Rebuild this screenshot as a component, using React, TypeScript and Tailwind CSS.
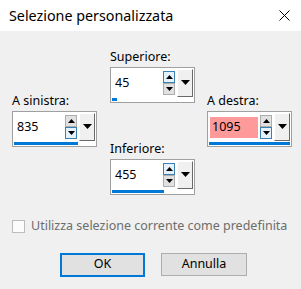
import React from "react";

const font = { fontFamily: '"Noto Sans", "Open Sans", sans-serif' };

function SpinBtn({ dir, active }: { dir: "up" | "down"; active: boolean }) {
  return (
    <div
      className={
        "w-[12px] h-[12px] flex items-center justify-center border " +
        (active ? "border-[#3c7fb1] bg-[#e5f1fb]" : "border-[#adadad] bg-[#e1e1e1]")
      }
    >
      <svg width="7" height="4" viewBox="0 0 7 4">
        {dir === "up" ? (
          <polygon points="0,4 7,4 3.5,0" fill="#000" />
        ) : (
          <polygon points="0,0 7,0 3.5,4" fill="#000" />
        )}
      </svg>
    </div>
  );
}

function SpinBox({
  value,
  bar,
  upActive,
  pink,
}: {
  value: string;
  bar: number;
  upActive: boolean;
  pink?: boolean;
}) {
  return (
    <div className="w-[85px] h-[36px] border border-[#a0a0a0] bg-white flex flex-col">
      <div className="flex-1 flex">
        <div className="flex-1 flex items-center pl-[2px] pr-[2px] pt-[1px]">
          <div
            className={
              "flex-1 h-[21px] flex items-center pl-[2px] text-[12.5px] text-black " +
              (pink ? "bg-[#ff9a9a]" : "")
            }
          >
            {value}
          </div>
          <div className="flex flex-col ml-[2px]">
            <SpinBtn dir="up" active={upActive} />
            <SpinBtn dir="down" active={!upActive} />
          </div>
        </div>
        <div className="w-[16px] mt-[1px] mr-[1px] bg-[#f0f0f0] border-t border-l border-t-white border-l-white border-r border-b border-r-[#696969] border-b-[#696969] flex justify-center pt-[10px]">
          <svg width="9" height="5" viewBox="0 0 9 5">
            <polygon points="0,0 9,0 4.5,5" fill="#000" />
          </svg>
        </div>
      </div>
      <div className="h-[5px] pt-[1px] px-[1px]">
        <div className="h-[3px] bg-[#0078d7]" style={{ width: `${bar}%` }} />
      </div>
    </div>
  );
}

function Group({
  label,
  children,
}: {
  label: string;
  children: React.ReactNode;
}) {
  return (
    <div className="flex flex-col">
      <div className="h-[16px] leading-[16px] text-[12.5px] text-black mb-[2px]">{label}</div>
      {children}
    </div>
  );
}

export default function App() {
  return (
    <div className="w-[301px] h-[289px] bg-[#f0f0f0] flex flex-col overflow-hidden" style={font}>
      <div className="h-[31px] bg-white flex items-center justify-between pl-[9px] pr-[10px]">
        <span className="text-[14.3px] text-black">Selezione personalizzata</span>
        <svg width="11" height="11" viewBox="0 0 11 11" className="mr-[1px]">
          <path d="M0.5 0.5 L10.5 10.5 M10.5 0.5 L0.5 10.5" stroke="#000" strokeWidth="1" />
        </svg>
      </div>
      <div className="flex pl-[12px]">
        <div className="pt-[62px]">
          <Group label="A sinistra:">
            <SpinBox value="835" bar={79} upActive={false} />
          </Group>
        </div>
        <div className="ml-[13px] pt-[18px] flex flex-col">
          <Group label="Superiore:">
            <SpinBox value="45" bar={6} upActive={true} />
          </Group>
          <div className="h-[38px]" />
          <Group label="Inferiore:">
            <SpinBox value="455" bar={64} upActive={true} />
          </Group>
        </div>
        <div className="ml-[12px] pt-[62px]">
          <Group label="A destra:">
            <SpinBox value="1095" bar={100} upActive={false} pink />
          </Group>
        </div>
      </div>
      <div className="flex items-center pl-[12px] mt-[22px]">
        <div className="w-[13px] h-[13px] border border-[#bcbcbc] bg-[#fcfcfc]" />
        <span className="ml-[6px] text-[12.5px] text-[#6d6d6d]">
          Utilizza selezione corrente come predefinita
        </span>
      </div>
      <div className="flex pl-[60px] mt-[17px] gap-[16px]">
        <button className="w-[85px] h-[24px] border-2 border-[#0078d7] bg-[#e1e1e1] text-[12.5px] text-black flex items-center justify-center">
          OK
        </button>
        <button className="w-[86px] h-[23px] border border-[#adadad] bg-[#e1e1e1] text-[12.5px] text-black flex items-center justify-center">
          Annulla
        </button>
      </div>
    </div>
  );
}
